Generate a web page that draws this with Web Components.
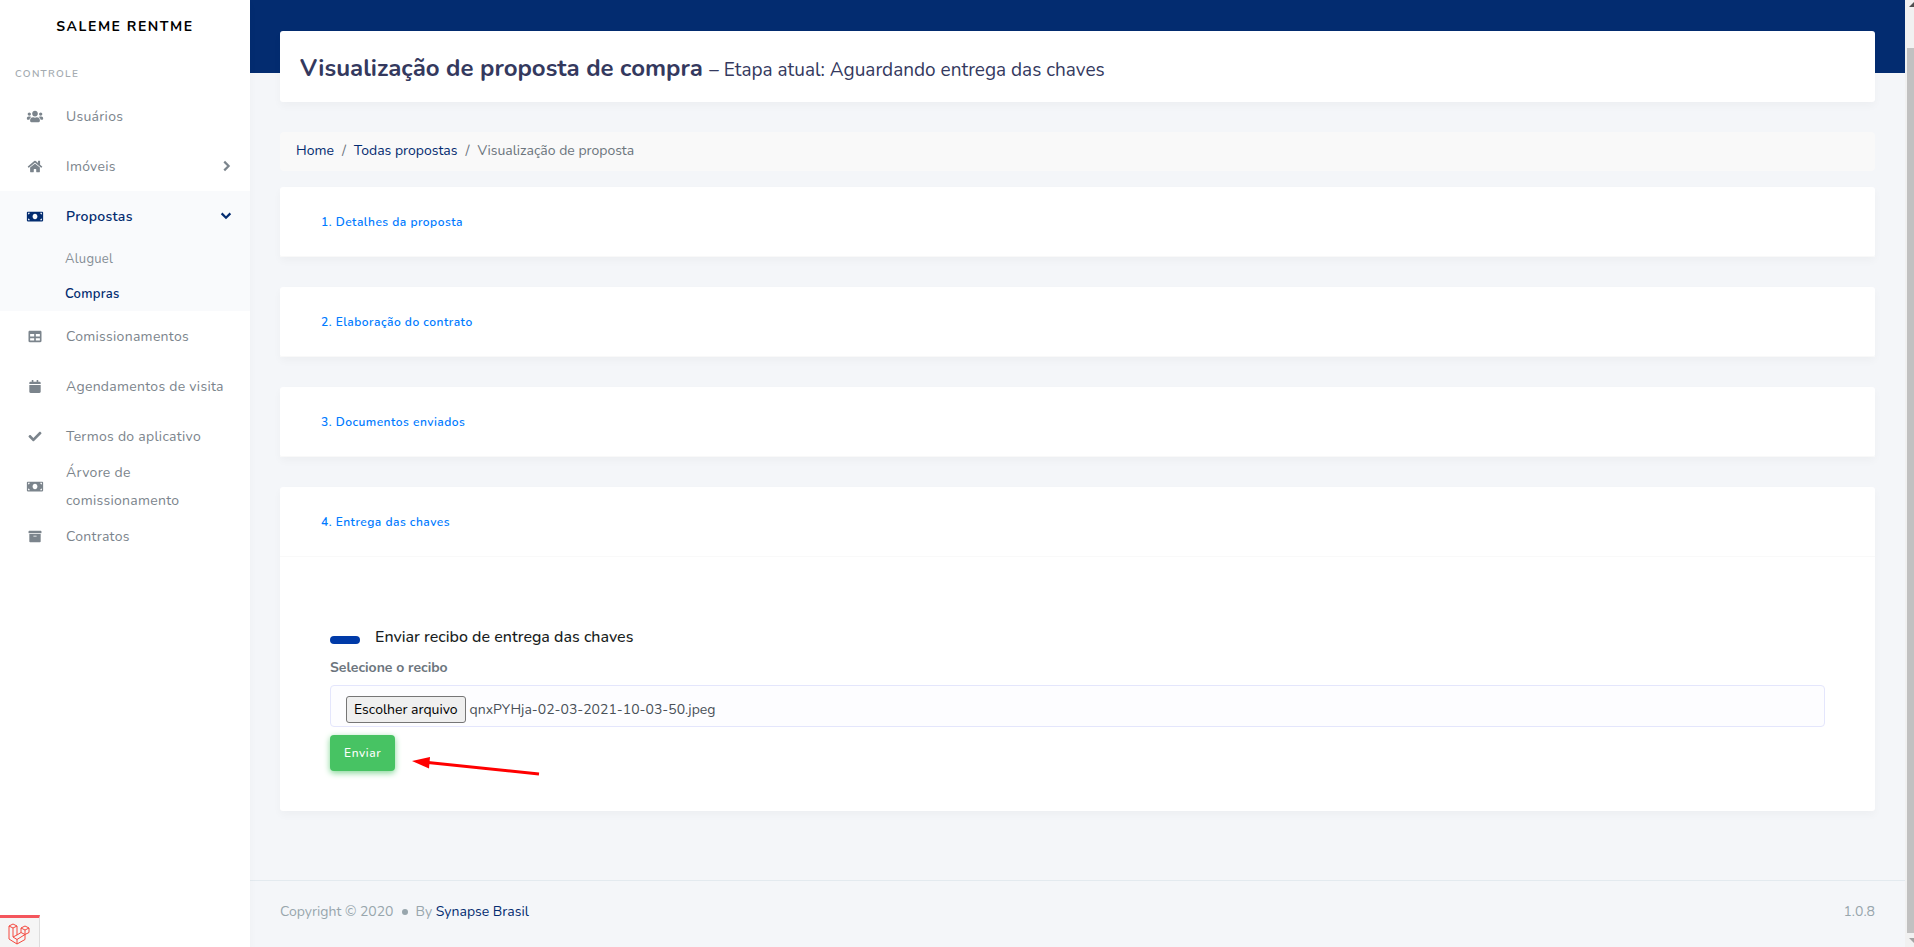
<!DOCTYPE html>
<html lang="pt-BR">
<head>
<meta charset="utf-8">
<meta name="viewport" content="width=device-width, initial-scale=1">
<title>Visualização de proposta – Saleme Rentme</title>
<style>
  html, body { margin: 0; }
  body {
    font-family: Nunito, Lato, "Open Sans", sans-serif;
    font-size: 14px;
    line-height: 24px;
    color: #6c757d;
    background: #f4f6f9;
    --navy: #032c70;
    --gray: #7b848c;
    --shadow: 0 4px 8px rgba(0, 0, 0, .03);
  }
</style>
</head>
<body>
<app-shell>
  <side-bar slot="sidebar">
    <nav-item icon="users">Usuários</nav-item>
    <nav-item icon="home" arrow="right">Imóveis</nav-item>
    <nav-item icon="money" arrow="down" active>Propostas
      <sub-item slot="sub">Aluguel</sub-item>
      <sub-item slot="sub" active>Compras</sub-item>
    </nav-item>
    <nav-item icon="table">Comissionamentos</nav-item>
    <nav-item icon="calendar">Agendamentos de visita</nav-item>
    <nav-item icon="check">Termos do aplicativo</nav-item>
    <nav-item icon="money">Árvore de comissionamento</nav-item>
    <nav-item icon="archive">Contratos</nav-item>
  </side-bar>
  <page-title>Visualização de proposta de compra<span slot="stage">– Etapa atual: Aguardando entrega das chaves</span></page-title>
  <bread-crumb></bread-crumb>
  <step-card>1. Detalhes da proposta</step-card>
  <step-card>2. Elaboração do contrato</step-card>
  <step-card>3. Documentos enviados</step-card>
  <step-card>4. Entrega das chaves<receipt-form slot="body"></receipt-form></step-card>
  <page-footer slot="footer"></page-footer>
  <scroll-rail slot="rail"></scroll-rail>
</app-shell>
<debug-badge></debug-badge>

<script>
const ICONS = {
  users: ['0 0 640 512', 'M96 224c35.300 0 64-28.700 64-64s-28.700-64-64-64-64 28.700-64 64 28.700 64 64 64zm448 0c35.300 0 64-28.700 64-64s-28.700-64-64-64-64 28.700-64 64 28.700 64 64 64zm32 32h-64c-17.600 0-33.500 7.100-45.100 18.600 40.300 22.100 68.900 62 75.100 109.400h66c17.700 0 32-14.300 32-32v-32c0-35.300-28.700-64-64-64zm-256 0c61.900 0 112-50.100 112-112S381.900 32 320 32 208 82.100 208 144s50.100 112 112 112zm76.800 32h-8.300c-20.800 10-43.900 16-68.500 16s-47.600-6-68.500-16h-8.300C179.600 288 128 339.600 128 403.200V432c0 26.500 21.500 48 48 48h288c26.500 0 48-21.500 48-48v-28.800c0-63.600-51.600-115.200-115.200-115.200zm-223.700-13.400C161.500 263.100 145.600 256 128 256H64c-35.300 0-64 28.700-64 64v32c0 17.700 14.300 32 32 32h65.900c6.300-47.400 34.900-87.300 75.200-109.400z'],
  home: ['0 0 576 512', 'M280.370 148.260L96 300.110V464a16 16 0 0 0 16 16l112.060-.29a16 16 0 0 0 15.920-16V368a16 16 0 0 1 16-16h64a16 16 0 0 1 16 16v95.640a16 16 0 0 0 16 16.050L464 480a16 16 0 0 0 16-16V300L295.670 148.260a12.190 12.190 0 0 0-15.300 0zM571.600 251.470L488 182.560V44.050a12 12 0 0 0-12-12h-56a12 12 0 0 0-12 12v72.610L318.470 43a48 48 0 0 0-61 0L4.340 251.470a12 12 0 0 0-1.600 16.900l25.500 31A12 12 0 0 0 45.150 301l235.220-193.740a12.190 12.190 0 0 1 15.300 0L530.900 301a12 12 0 0 0 16.900-1.600l25.500-31a12 12 0 0 0-1.700-16.930z'],
  money: ['0 0 640 512', 'M608 64H32C14.330 64 0 78.330 0 96v320c0 17.670 14.330 32 32 32h576c17.670 0 32-14.330 32-32V96c0-17.670-14.330-32-32-32zM48 400v-64c35.350 0 64 28.650 64 64H48zm0-224v-64h64c0 35.350-28.650 64-64 64zm272 192c-53.020 0-96-50.150-96-112s42.980-112 96-112 96 50.130 96 112-43 112-96 112zm272 32h-64c0-35.350 28.650-64 64-64v64zm0-224c-35.350 0-64-28.650-64-64h64v64z'],
  table: ['0 0 512 512', 'M464 32H48C21.490 32 0 53.490 0 80v352c0 26.510 21.490 48 48 48h416c26.510 0 48-21.490 48-48V80c0-26.510-21.490-48-48-48zM224 416H64v-96h160v96zm0-160H64v-96h160v96zm224 160H288v-96h160v96zm0-160H288v-96h160v96z'],
  calendar: ['0 0 448 512', 'M12 192h424c6.600 0 12 5.400 12 12v260c0 26.500-21.500 48-48 48H48c-26.500 0-48-21.500-48-48V204c0-6.600 5.400-12 12-12zm436-44v-36c0-26.500-21.500-48-48-48h-48V12c0-6.600-5.400-12-12-12h-40c-6.600 0-12 5.400-12 12v52H160V12c0-6.600-5.400-12-12-12h-40c-6.600 0-12 5.400-12 12v52H48C21.500 64 0 85.500 0 112v36c0 6.600 5.400 12 12 12h424c6.600 0 12-5.400 12-12z'],
  check: ['0 0 512 512', 'M173.898 439.404l-166.400-166.400c-9.997-9.997-9.997-26.206 0-36.204l36.203-36.204c9.997-9.998 26.207-9.998 36.204 0L192 312.690 432.095 72.596c9.997-9.997 26.207-9.997 36.204 0l36.203 36.204c9.997 9.997 9.997 26.206 0 36.204l-294.400 294.401c-9.998 9.997-26.207 9.997-36.204-.001z'],
  archive: ['0 0 512 512', 'M32 448c0 17.700 14.300 32 32 32h384c17.700 0 32-14.300 32-32V160H32v288zm160-212c0-6.600 5.400-12 12-12h104c6.600 0 12 5.400 12 12v8c0 6.600-5.400 12-12 12H204c-6.600 0-12-5.400-12-12v-8zM480 32H32C14.300 32 0 46.300 0 64v48c0 8.800 7.200 16 16 16h480c8.800 0 16-7.200 16-16V64c0-17.700-14.300-32-32-32z']
};

function define(name, html, setup) {
  customElements.define(name, class extends HTMLElement {
    constructor() {
      super();
      this.attachShadow({ mode: 'open' });
    }
    connectedCallback() {
      if (this.shadowRoot.childNodes.length) return;
      this.shadowRoot.innerHTML = typeof html === 'function' ? html(this) : html;
      if (setup) setup(this.shadowRoot, this);
    }
  });
}

define('app-shell', `
  <style>
    :host { display: flex; min-height: 100vh; }
    .main { flex: 1; min-width: 0; display: flex; flex-direction: column;
      background: linear-gradient(var(--navy), var(--navy)) top / 100% 73px no-repeat; }
    main { padding: 31px 30px 0; }
    ::slotted([slot=footer]) { margin-top: auto; }
  </style>
  <slot name="sidebar"></slot>
  <div class="main"><main><slot></slot></main><slot name="footer"></slot></div>
  <slot name="rail"></slot>`);

define('side-bar', `
  <style>
    :host { display: block; flex: none; width: 250px; background: #fff; box-shadow: var(--shadow); position: relative; }
    .brand { display: block; text-align: center; font-weight: 700; letter-spacing: .11em; line-height: 54px;
      color: #000; text-decoration: none; }
    h2 { margin: 8px 0 5px; padding-left: 15px; font-size: 10px; line-height: 24px; font-weight: 600;
      letter-spacing: .13em; color: #a3aab0; }
  </style>
  <a class="brand" href="#">SALEME RENTME</a>
  <h2>CONTROLE</h2>
  <nav><slot></slot></nav>`);

define('nav-item', el => {
  const [box, path] = ICONS[el.getAttribute('icon')];
  const arrow = el.getAttribute('arrow');
  const d = arrow === 'down' ? 'M3 5l5 5 5-5' : 'M6 3l5 5-5 5';
  return `
  <style>
    :host { display: block; color: var(--gray); }
    :host([active]) { background: #f9fafc; color: var(--navy); font-weight: 600; }
    a { display: flex; align-items: center; height: 50px; padding: 0 17px 0 20px; color: inherit;
      text-decoration: none; letter-spacing: .02em; line-height: 28px; }
    .icon { flex: none; width: 30px; height: 13px; margin-right: 16px; fill: currentColor; }
    .label { flex: 1; padding-top: 2px; }
    .arrow { flex: none; width: 14px; height: 14px; fill: none; stroke: currentColor; stroke-width: 2.500; }
  </style>
  <a href="#"><svg class="icon" viewBox="${box}"><path d="${path}"/></svg><span class="label"><slot></slot></span>${
    arrow ? `<svg class="arrow" viewBox="0 0 16 16"><path d="${d}"/></svg>` : ''}</a>
  <slot name="sub"></slot>`;
});

define('sub-item', `
  <style>
    :host { display: block; color: #868e96; font-weight: 400; }
    :host([active]) { color: var(--navy); font-weight: 600; }
    a { display: block; padding: 2px 0 0 65px; font-size: 13px; line-height: 33px; letter-spacing: .02em;
      color: inherit; text-decoration: none; }
  </style>
  <a href="#"><slot></slot></a>`);

define('page-title', `
  <style>
    :host { display: block; background: #fff; border-radius: 3px; box-shadow: var(--shadow); padding: 22px 20px 18px; margin-bottom: 30px; }
    h1 { margin: 0; font-size: 24px; line-height: 31px; font-weight: 700; color: #34395e; }
    small { font-size: 19px; line-height: 19px; font-weight: 400; }
  </style>
  <h1><slot></slot> <small><slot name="stage"></slot></small></h1>`);

define('bread-crumb', `
  <style>
    :host { display: block; margin-bottom: 16px; }
    ol { display: flex; gap: 8px; margin: 0; padding: 7px 16px 8px; list-style: none; background: #f9f9f9; border-radius: 4px; }
    li + li::before { content: "/"; padding-right: 8px; color: #6c757d; }
    a { color: var(--navy); text-decoration: none; }
  </style>
  <nav aria-label="Trilha"><ol>
    <li><a href="#">Home</a></li><li><a href="#">Todas propostas</a></li><li>Visualização de proposta</li>
  </ol></nav>`);

define('step-card', `
  <style>
    :host { display: block; background: #fff; border-radius: 3px; box-shadow: var(--shadow); margin-bottom: 30px; }
    header { padding: 23px 41px 22px; border-bottom: 1px solid #f9f9f9; }
    a { font-size: 12px; line-height: 24px; font-weight: 600; letter-spacing: .04em; color: #007bff; text-decoration: none; }
  </style>
  <header><a href="#"><slot></slot></a></header>
  <slot name="body"></slot>`);

define('receipt-form', `
  <style>
    :host { display: block; padding: 66px 50px 40px; }
    h2 { display: flex; align-items: center; gap: 15px; margin: 0 0 5px; font-size: 16px; line-height: 28px; font-weight: 500; color: #191d21; }
    h2::before { content: ""; width: 30px; height: 8px; margin-top: 5px; border-radius: 4px; background: #003aa8; }
    label { display: block; font-weight: 700; line-height: 24px; margin-bottom: 5px; }
    .field { position: relative; display: flex; align-items: center; gap: 4px; height: 42px; padding: 7px 15px 0;
      box-sizing: border-box; border: 1px solid #e4e6fc; border-radius: 4px; background: #fdfdff; color: #495057; }
    .field input { position: absolute; width: 1px; height: 1px; opacity: 0; }
    .pick { font: inherit; color: #000; background: #efefef; border: 1px solid #767676; border-radius: 3px;
      padding: 0 7px; height: 27px; }
    .actions { display: flex; gap: 15px; margin-top: 8px; height: 36px; }
    .send { height: 36px; padding: 0 14px; border: 0; border-radius: 4px;
      background: #47c363; color: #fff; font: inherit; font-size: 12px; font-weight: 500; letter-spacing: .05em;
      box-shadow: 0 2px 6px #81d694; }
    .arrow { width: 130px; height: 36px; margin-top: 10px; }
  </style>
  <form>
    <h2>Enviar recibo de entrega das chaves</h2>
    <label for="receipt">Selecione o recibo</label>
    <div class="field"><input type="file" id="receipt" tabindex="-1"><button class="pick" type="button">Escolher arquivo</button><output for="receipt">qnxPYHja-02-03-2021-10-03-50.jpeg</output></div>
    <div class="actions">
      <button class="send" type="button">Enviar</button>
      <svg class="arrow" viewBox="0 0 130 36" aria-hidden="true"><path d="M18 17.500L129 29" stroke="#f00" stroke-width="3"/><path d="M2 16L20 12 19 23.500z" fill="#f00"/></svg>
    </div>
  </form>`, root => {
  const input = root.querySelector('input');
  root.querySelector('.pick').addEventListener('click', () => input.click());
  input.addEventListener('change', () => {
    if (input.files[0]) root.querySelector('output').textContent = input.files[0].name;
  });
});

define('page-footer', `
  <style>
    :host { display: flex; justify-content: space-between; padding: 19px 30px 23px; border-top: 1px solid #e3eaef; color: #98a6ad; }
    .copy { display: flex; align-items: center; }
    .dot { width: 6px; height: 6px; margin: 0 8px; border-radius: 50%; background: currentColor; }
    a { color: var(--navy); text-decoration: none; }
  </style>
  <div class="copy"><span>Copyright © 2020</span><span class="dot"></span><span>By <a href="#">Synapse Brasil</a></span></div>
  <span>1.0.8</span>`);

define('scroll-rail', `
  <style>
    :host { flex: none; width: 9px; overflow: hidden; display: flex; flex-direction: column; background: #f1f1f1; }
    svg { flex: none; width: 15px; height: 17px; margin-left: 2px; }
    .thumb { flex: 1; margin: 31px 0 0 2px; background: #c1c1c1; }
    .down { height: 14px; }
  </style>
  <svg viewBox="0 0 15 17"><path d="M2 7L7 2l5 5z" fill="#505050"/></svg>
  <div class="thumb"></div>
  <svg class="down" viewBox="0 0 15 14"><path d="M2 5l5 5 5-5z" fill="#a3a3a3"/></svg>`);

define('debug-badge', `
  <style>
    :host { position: fixed; left: 0; bottom: 0; z-index: 2; }
    button { display: block; width: 40px; height: 32px; padding: 3px 0 0; box-sizing: border-box; border: 0;
      border-top: 3px solid #f4555c; border-right: 1px solid #ddd; background: #f5f5f5; }
    svg { display: block; width: 22px; height: 22px; margin: 0 0 0 8px; fill: none; stroke: #f4483e; stroke-width: 1; stroke-linejoin: round; }
  </style>
  <button type="button" aria-label="Barra de depuração"><svg viewBox="0 0 22 22">
    <path d="M1 3l4-2 4 2-4 2zM1 3v13l8 5 8-4.500v-5M5 5v9l4 2.500 8-5 4-2V5l-4-2-4 2v4.500L9 12V3M13 5l4 2 4-2M17 7v4.500M13 9.500l4 2M5 14l4-2M9 16.500V21"/>
  </svg></button>`);
</script>
</body>
</html>
